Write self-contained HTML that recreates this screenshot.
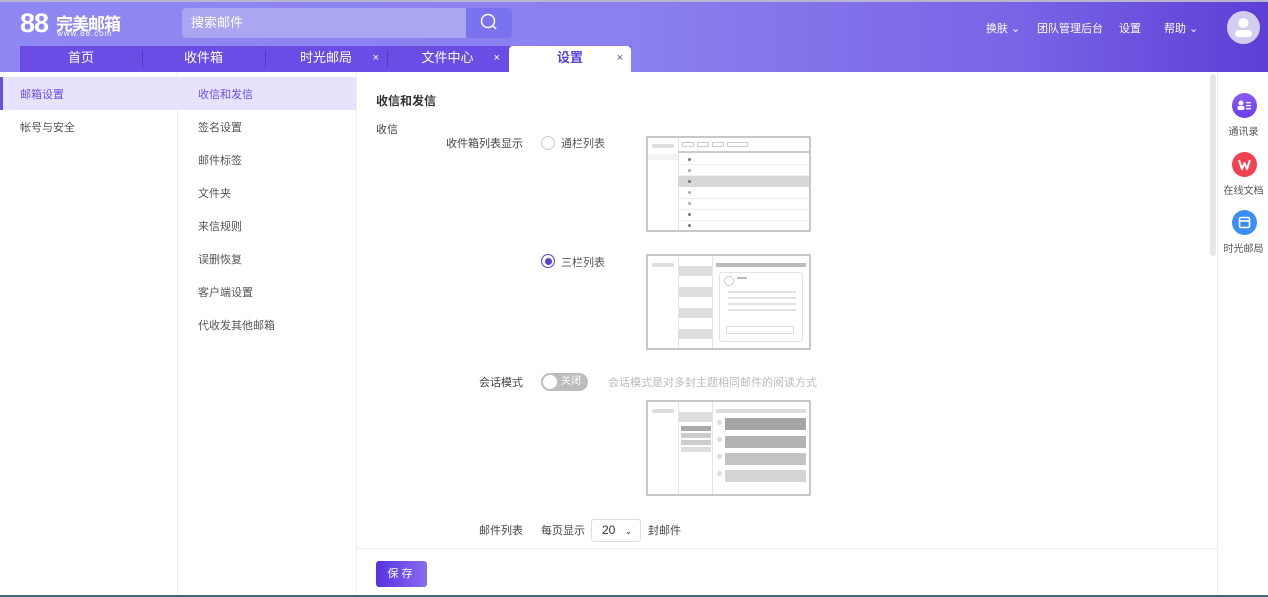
<!DOCTYPE html>
<html><head><meta charset="utf-8"><style>
*{margin:0;padding:0;box-sizing:border-box}
body{width:1268px;height:597px;overflow:hidden;font-family:"Liberation Sans","Noto Sans CJK SC",sans-serif;font-size:12px;color:#333;background:#fff;position:relative}
.hdr{position:absolute;left:0;top:0;width:1268px;height:72px;background:linear-gradient(90deg,#8f88f2 0%,#8a80ee 50%,#7a64e6 80%,#5d3fd6 100%);border-top:2px solid #b8b6cc}
.logo{position:absolute;left:20px;top:6px;color:#fff}
.logo b{font-size:27px;font-weight:bold;letter-spacing:-1px}
.logo span{position:absolute;left:36px;top:2px;font-size:17px;font-weight:bold;white-space:nowrap;letter-spacing:-1px}
.logo i{position:absolute;left:37px;top:21px;font-size:8px;font-style:normal;letter-spacing:1px;white-space:nowrap}
.search{position:absolute;left:182px;top:6px;width:284px;height:30px;background:#aaa6f2;border-radius:4px 0 0 4px;color:#fff;font-size:13px;line-height:30px;padding-left:9px}
.sbtn{position:absolute;left:466px;top:6px;width:46px;height:30px;background:#7a72ee;border-radius:0 4px 4px 0}
.nav{position:absolute;top:18px;color:#fff;font-size:11px}
.av{position:absolute;left:1227px;top:9px;width:33px;height:33px;border-radius:50%;background:#d3cdf0}
.tabs{position:absolute;left:20px;top:46px;width:611px;height:26px;background:#6b4de6}
.tab{position:absolute;top:0;height:26px;line-height:24px;text-align:center;color:#fff;font-size:13px}
.tab .x{position:absolute;right:8px;top:0;font-size:11px}
.sep{position:absolute;top:4px;width:1px;height:18px;background:#5438c0}
.c1{position:absolute;left:0;top:72px;width:178px;height:523px;border-right:1px solid #eee}
.c2{position:absolute;left:178px;top:72px;width:179px;height:523px;border-right:1px solid #eee}
.it{position:absolute;font-size:11px;color:#555}
.rp{position:absolute;left:1217px;top:72px;width:51px;height:523px;border-left:1px solid #eee}
.ic{position:absolute;left:14px;width:25px;height:25px;border-radius:50%}
.rl{position:absolute;width:51px;text-align:center;font-size:10px;color:#555}
.lbl{position:absolute;font-size:11px;color:#444}
.pv{position:absolute;border:2px solid #c8c8c8;background:#fff;overflow:hidden}
.g{position:absolute;background:#ddd}
.d{position:absolute;left:40px;width:3px;height:3px;border-radius:50%;background:#778}
.ln{position:absolute;left:30px;width:135px;height:1px;background:#eee}
</style></head><body>
<div class="hdr">
 <div class="logo"><b>88</b><span>完美邮箱</span><i>www.88.com</i></div>
 <div class="search">搜索邮件</div>
 <div class="sbtn"><svg width="46" height="30"><circle cx="22" cy="13" r="6.5" fill="none" stroke="#fff" stroke-width="1.5"/><line x1="26.5" y1="17.5" x2="30" y2="21" stroke="#fff" stroke-width="1.5"/></svg></div>
 <div class="nav" style="left:986px">换肤 ⌄</div>
 <div class="nav" style="left:1037px">团队管理后台</div>
 <div class="nav" style="left:1119px">设置</div>
 <div class="nav" style="left:1164px">帮助 ⌄</div>
 <div class="av"><svg width="33" height="33"><circle cx="16.5" cy="12" r="5" fill="#fff"/><rect x="8" y="19" width="17" height="7" rx="3.5" fill="#fff"/></svg></div>
</div>
<div class="tabs">
 <div class="tab" style="left:0;width:122px">首页</div><div class="sep" style="left:122px"></div>
 <div class="tab" style="left:122px;width:123px">收件箱</div><div class="sep" style="left:245px"></div>
 <div class="tab" style="left:245px;width:122px">时光邮局<span class="x">×</span></div><div class="sep" style="left:367px"></div>
 <div class="tab" style="left:367px;width:121px">文件中心<span class="x">×</span></div>
 <div class="tab" style="left:489px;width:122px;background:#fff;color:#5a3fd8;font-weight:bold;border-radius:4px 4px 0 0">设置<span class="x" style="font-weight:normal">×</span></div>
</div>
<div class="c1">
 <div style="position:absolute;left:0;top:5px;width:178px;height:33px;background:#e8e3fd;border-left:3px solid #6b4de6"></div>
 <div class="it" style="left:20px;top:14px;color:#6b4de6">邮箱设置</div>
 <div class="it" style="left:20px;top:47px">帐号与安全</div>
</div>
<div class="c2">
 <div style="position:absolute;left:0;top:5px;width:178px;height:33px;background:#e8e3fd"></div>
 <div class="it" style="left:20px;top:14px;color:#6b4de6">收信和发信</div>
 <div class="it" style="left:20px;top:47px">签名设置</div>
 <div class="it" style="left:20px;top:80px">邮件标签</div>
 <div class="it" style="left:20px;top:113px">文件夹</div>
 <div class="it" style="left:20px;top:146px">来信规则</div>
 <div class="it" style="left:20px;top:179px">误删恢复</div>
 <div class="it" style="left:20px;top:212px">客户端设置</div>
 <div class="it" style="left:20px;top:245px">代收发其他邮箱</div>
</div>
<div style="position:absolute;left:1210px;top:74px;width:6px;height:182px;background:#e6e6e6;border-radius:3px"></div>
<div class="lbl" style="left:376px;top:92px;font-size:12px;font-weight:bold;color:#333">收信和发信</div>
<div class="lbl" style="left:376px;top:121px">收信</div>
<div class="lbl" style="left:446px;top:135px">收件箱列表显示</div>
<div style="position:absolute;left:541px;top:136px;width:14px;height:14px;border:1px solid #ccc;border-radius:50%"></div>
<div class="lbl" style="left:561px;top:135px;color:#555">通栏列表</div>
<div class="pv" style="left:646px;top:136px;width:165px;height:96px">
 <div class="g" style="left:4px;top:6px;width:22px;height:4px;border-radius:2px"></div>
 <div class="g" style="left:0;top:16px;width:30px;height:6px;background:#f3f3f3"></div>
 <div style="position:absolute;left:30px;top:0;width:1px;height:96px;background:#e4e4e4"></div>
 <div style="position:absolute;left:34px;top:4px;width:12px;height:5px;border:1px solid #ccc"></div>
 <div style="position:absolute;left:49px;top:4px;width:12px;height:5px;border:1px solid #ccc"></div>
 <div style="position:absolute;left:64px;top:4px;width:12px;height:5px;border:1px solid #ccc"></div>
 <div style="position:absolute;left:79px;top:4px;width:21px;height:5px;border:1px solid #ccc"></div>
 <div class="g" style="left:30px;top:13px;width:135px;height:2px;background:#ccc"></div>
 <div class="ln" style="top:26px"></div><div class="ln" style="top:37px"></div><div class="ln" style="top:60px"></div><div class="ln" style="top:71px"></div><div class="ln" style="top:82px"></div>
 <div class="g" style="left:30px;top:38px;width:135px;height:11px;background:#d8d8d8"></div>
 <div class="d" style="top:20px"></div><div class="d" style="top:31px;background:#aab"></div><div class="d" style="top:42px"></div><div class="d" style="top:53px;background:#aab"></div><div class="d" style="top:64px;background:#aab"></div><div class="d" style="top:75px"></div><div class="d" style="top:86px"></div>
</div>
<div style="position:absolute;left:541px;top:254px;width:14px;height:14px;border:1px solid #5a3fd8;border-radius:50%"><div style="margin:2.5px;width:7px;height:7px;border-radius:50%;background:#5a3fd8"></div></div>
<div class="lbl" style="left:561px;top:254px;color:#555">三栏列表</div>
<div class="pv" style="left:646px;top:254px;width:165px;height:96px">
 <div class="g" style="left:4px;top:7px;width:22px;height:4px;border-radius:2px"></div>
 <div style="position:absolute;left:30px;top:0;width:1px;height:96px;background:#e4e4e4"></div>
 <div style="position:absolute;left:64px;top:0;width:1px;height:96px;background:#e4e4e4"></div>
 <div class="g" style="left:31px;top:10px;width:33px;height:10px"></div>
 <div class="g" style="left:31px;top:31px;width:33px;height:10px"></div>
 <div class="g" style="left:31px;top:52px;width:33px;height:10px"></div>
 <div class="g" style="left:31px;top:73px;width:33px;height:10px"></div>
 <div class="g" style="left:68px;top:7px;width:90px;height:4px;background:#bbb"></div>
 <div style="position:absolute;left:71px;top:16px;width:84px;height:70px;border:1px solid #e2e2e2;border-radius:3px"></div>
 <div style="position:absolute;left:76px;top:20px;width:10px;height:10px;border:1px solid #ccc;border-radius:50%"></div>
 <div class="g" style="left:89px;top:21px;width:10px;height:2px;background:#bbb"></div>
 <div class="g" style="left:80px;top:35px;width:68px;height:2px;background:#e2e2e2"></div>
 <div class="g" style="left:80px;top:41px;width:68px;height:2px;background:#e2e2e2"></div>
 <div class="g" style="left:80px;top:47px;width:68px;height:2px;background:#e2e2e2"></div>
 <div class="g" style="left:80px;top:53px;width:68px;height:2px;background:#e2e2e2"></div>
 <div style="position:absolute;left:78px;top:70px;width:68px;height:8px;border:1px solid #ddd"></div>
</div>
<div class="lbl" style="left:479px;top:374px">会话模式</div>
<div style="position:absolute;left:541px;top:373px;width:47px;height:18px;border-radius:9px;background:#bdbdbd;color:#fff;font-size:10px;line-height:18px;padding-left:20px">关闭<div style="position:absolute;left:2px;top:2px;width:14px;height:14px;border-radius:50%;background:#fff"></div></div>
<div class="lbl" style="left:608px;top:374px;color:#bbb">会话模式是对多封主题相同邮件的阅读方式</div>
<div class="pv" style="left:646px;top:400px;width:165px;height:96px">
 <div class="g" style="left:4px;top:7px;width:22px;height:4px;border-radius:2px"></div>
 <div style="position:absolute;left:30px;top:0;width:1px;height:96px;background:#e4e4e4"></div>
 <div style="position:absolute;left:64px;top:0;width:1px;height:96px;background:#e4e4e4"></div>
 <div class="g" style="left:31px;top:10px;width:33px;height:10px"></div>
 <div class="g" style="left:33px;top:24px;width:30px;height:5px;background:#aaa"></div>
 <div class="g" style="left:33px;top:31px;width:30px;height:5px;background:#ccc"></div>
 <div class="g" style="left:33px;top:38px;width:30px;height:5px;background:#ccc"></div>
 <div class="g" style="left:33px;top:45px;width:30px;height:5px"></div>
 <div class="g" style="left:68px;top:7px;width:90px;height:4px"></div>
 <div class="g" style="left:69px;top:18px;width:5px;height:5px;border-radius:50%"></div>
 <div class="g" style="left:69px;top:35px;width:5px;height:5px;border-radius:50%"></div>
 <div class="g" style="left:69px;top:52px;width:5px;height:5px;border-radius:50%"></div>
 <div class="g" style="left:69px;top:69px;width:5px;height:5px;border-radius:50%"></div>
 <div class="g" style="left:77px;top:16px;width:81px;height:12px;background:#a5a5a5"></div>
 <div class="g" style="left:77px;top:34px;width:81px;height:12px;background:#b3b3b3"></div>
 <div class="g" style="left:77px;top:51px;width:81px;height:12px;background:#c3c3c3"></div>
 <div class="g" style="left:77px;top:68px;width:81px;height:12px;background:#d5d5d5"></div>
</div>
<div class="lbl" style="left:479px;top:522px">邮件列表</div>
<div class="lbl" style="left:541px;top:522px">每页显示</div>
<div style="position:absolute;left:591px;top:519px;width:50px;height:23px;border:1px solid #ddd;border-radius:3px;font-size:12px;line-height:21px;padding-left:10px">20 <span style="font-size:9px;margin-left:6px">⌄</span></div>
<div class="lbl" style="left:648px;top:522px">封邮件</div>
<div style="position:absolute;left:357px;top:548px;width:860px;height:1px;background:#eee"></div>
<div style="position:absolute;left:376px;top:561px;width:51px;height:26px;border-radius:3px;background:linear-gradient(90deg,#5532e0,#8a6cf0);color:#fff;font-size:11px;line-height:26px;text-align:center;letter-spacing:3px">保存</div>
<div style="position:absolute;left:0;top:595px;width:1268px;height:2px;background:#3d6b7a"></div>
<div class="rp">
 <div class="ic" style="top:21px;background:linear-gradient(#8a5cf5,#6a3ee6)"><svg width="25" height="25"><circle cx="9" cy="10" r="2.5" fill="#fff"/><rect x="5.5" y="13" width="7" height="4" rx="1.5" fill="#fff"/><rect x="14" y="9" width="5" height="1.3" fill="#fff"/><rect x="14" y="12" width="5" height="1.3" fill="#fff"/><rect x="14" y="15" width="5" height="1.3" fill="#fff"/></svg></div>
 <div class="rl" style="top:51px">通讯录</div>
 <div class="ic" style="top:80px;background:#f0424f"><svg width="25" height="25"><path d="M7 8l3 9 2.5-6 2.5 6 3-9" fill="none" stroke="#fff" stroke-width="2" stroke-linejoin="round"/></svg></div>
 <div class="rl" style="top:110px">在线文档</div>
 <div class="ic" style="top:138px;background:#3b8ef5"><svg width="25" height="25"><rect x="7.5" y="7.5" width="10" height="10" rx="1.5" fill="none" stroke="#fff" stroke-width="1.6"/><line x1="7.5" y1="11" x2="17.5" y2="11" stroke="#fff" stroke-width="1.6"/></svg></div>
 <div class="rl" style="top:168px">时光邮局</div>
</div>
</body></html>
